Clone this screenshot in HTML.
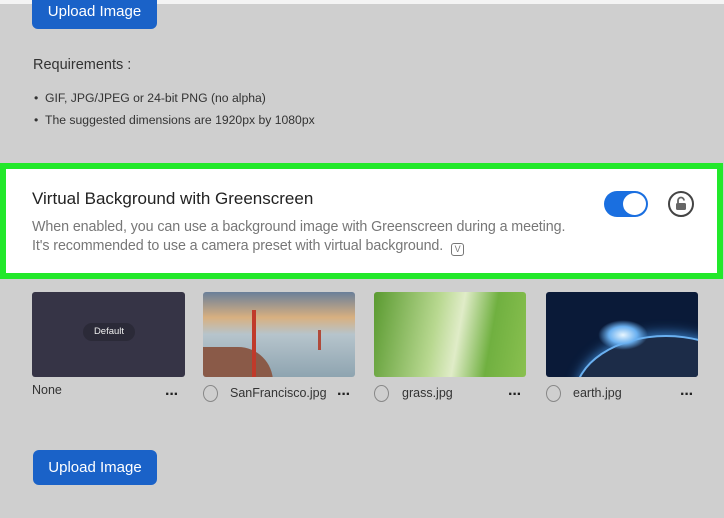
<!DOCTYPE html>
<html><head><style>
*{margin:0;padding:0;box-sizing:border-box}
body{width:724px;height:518px;background:#cfcfcf;font-family:"Liberation Sans",sans-serif;position:relative;overflow:hidden;color:#2a2a2a}
.abs{position:absolute}
.btn{background:#1a62c8;color:#fff;border-radius:6px;font-size:15px;text-align:center}
.small{font-size:12.2px;color:#333}
.thumb{position:absolute;top:292px;height:85px;border-radius:3px;overflow:hidden}
.lbl{position:absolute;top:386px;font-size:12.5px;color:#333}
.cb{position:absolute;top:385px;width:15px;height:17px;border:1px solid #888;border-radius:50%}
.dots{position:absolute;top:386px;font-size:16px;font-weight:bold;color:#222;letter-spacing:-1px}
</style></head><body>
<div class="abs" style="left:0;top:0;width:724px;height:4px;background:#f4f4f4"></div>
<div class="abs btn" style="left:32px;top:-6px;width:125px;height:35px;line-height:36px">Upload Image</div>
<div class="abs" style="left:33px;top:57px;font-size:14.5px;color:#333">Requirements :</div>
<div class="abs small" style="left:34px;top:91px">•&nbsp;&nbsp;GIF, JPG/JPEG or 24-bit PNG (no alpha)</div>
<div class="abs small" style="left:34px;top:113px">•&nbsp;&nbsp;The suggested dimensions are 1920px by 1080px</div>

<div class="abs" style="left:0;top:163px;width:723px;height:116px;background:#fff;border:6px solid #22e82a"></div>
<div class="abs" style="left:32px;top:189px;font-size:17px;color:#222">Virtual Background with Greenscreen</div>
<div class="abs" style="left:32px;top:218px;font-size:14.3px;color:#777;line-height:19px;letter-spacing:-0.1px">When enabled, you can use a background image with Greenscreen during a meeting.<br>It's recommended to use a camera preset with virtual background. <span style="display:inline-block;width:13px;height:13px;border:1px solid #777;border-radius:3px;font-size:9px;line-height:11px;text-align:center;vertical-align:-2px;margin-left:4px">V</span></div>
<div class="abs" style="left:604px;top:191px;width:44px;height:26px;border-radius:13px;background:#1a6fe0"></div>
<div class="abs" style="left:623px;top:193px;width:23px;height:22px;border-radius:50%;background:#fff"></div>
<div class="abs" style="left:668px;top:191px;width:26px;height:26px;border-radius:50%;border:2px solid #444"></div>
<svg class="abs" style="left:674px;top:196px" width="14" height="16" viewBox="0 0 14 16"><path d="M4 7V4.5a3 3 0 0 1 6 0" fill="none" stroke="#666" stroke-width="1.8"/><rect x="2" y="7" width="10" height="7" rx="1.5" fill="#666"/></svg>

<div class="thumb" style="left:32px;width:153px;background:#363446"><div class="abs" style="left:51px;top:31px;width:52px;height:18px;border-radius:9px;background:#2b2a38;color:#eee;font-size:9.5px;text-align:center;line-height:18px">Default</div></div>
<div class="thumb" style="left:203px;width:152px;background:linear-gradient(#6a7f9a 0%,#d8b080 30%,#b6c4cc 50%,#8ea4b0 100%)">
<div class="abs" style="left:0;top:55px;width:70px;height:35px;background:#8a5a48;border-radius:0 40px 0 0"></div>
<div class="abs" style="left:49px;top:18px;width:4px;height:68px;background:#c03a2a"></div>
<div class="abs" style="left:115px;top:38px;width:3px;height:20px;background:#b04a3a"></div></div>
<div class="thumb" style="left:374px;width:152px;background:linear-gradient(100deg,#5a9a30,#b8d890 40%,#e0ecc8 55%,#70b040 75%,#8ac050)"></div>
<div class="thumb" style="left:546px;width:152px;background:#0a1a38">
<div class="abs" style="left:30px;top:45px;width:180px;height:120px;border-radius:50%;background:#1c2c48;box-shadow:0 0 0 2px #6ab0f0,0 -4px 12px #3a80c8"></div>
<div class="abs" style="left:52px;top:28px;width:50px;height:30px;border-radius:50%;background:radial-gradient(#e8f6ff,#6ab0f0 40%,rgba(10,26,56,0) 70%)"></div>
</div>

<div class="lbl" style="left:32px;top:383px">None</div>
<div class="dots" style="left:165px">···</div>
<div class="cb" style="left:203px"></div><div class="lbl" style="left:230px">SanFrancisco.jpg</div><div class="dots" style="left:337px">···</div>
<div class="cb" style="left:374px"></div><div class="lbl" style="left:402px">grass.jpg</div><div class="dots" style="left:508px">···</div>
<div class="cb" style="left:546px"></div><div class="lbl" style="left:573px">earth.jpg</div><div class="dots" style="left:680px">···</div>

<div class="abs btn" style="left:33px;top:450px;width:124px;height:35px;line-height:35px">Upload Image</div>
</body></html>
